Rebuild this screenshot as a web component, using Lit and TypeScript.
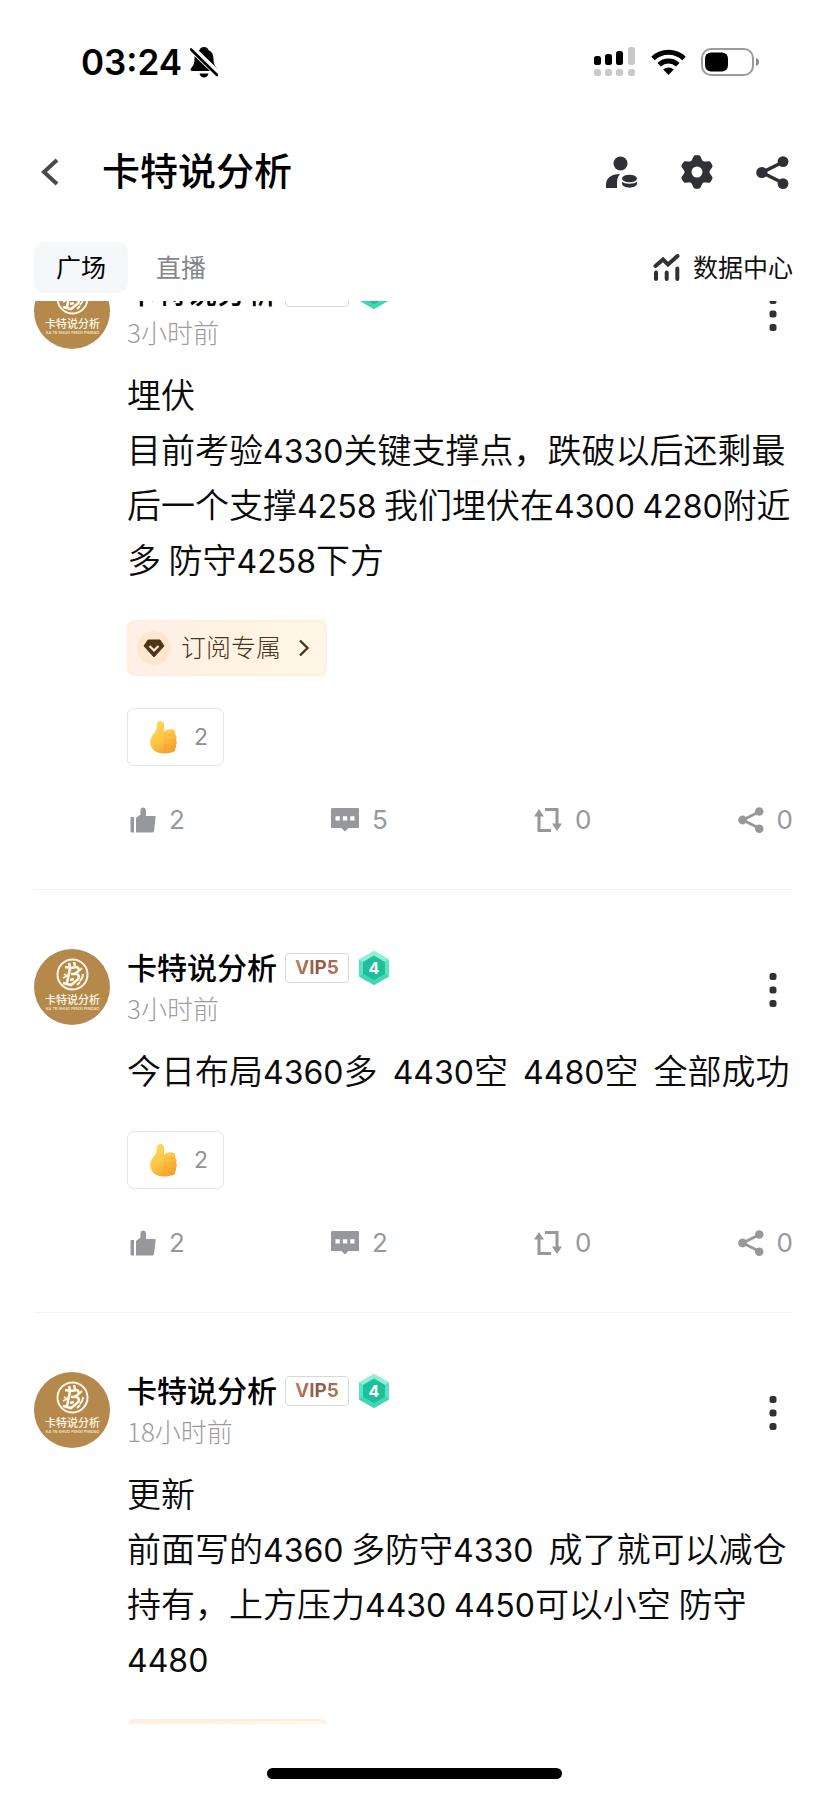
import { LitElement, html, css, svg, nothing } from "lit";
import { customElement, property } from "lit/decorators.js";

interface Post {
  time: string;
  text: string;
  subscribersOnly: boolean;
  reactions: number;
  likes: number;
  comments: number;
  reposts: number;
  shares: number;
}

const AUTHOR = "卡特说分析";

const POSTS: Post[] = [
  {
    time: "3小时前",
    text: "埋伏\n目前考验4330关键支撑点，跌破以后还剩最后一个支撑4258 我们埋伏在4300 4280附近多 防守4258下方",
    subscribersOnly: true,
    reactions: 2,
    likes: 2,
    comments: 5,
    reposts: 0,
    shares: 0,
  },
  {
    time: "3小时前",
    text: "今日布局4360多  4430空  4480空  全部成功",
    subscribersOnly: false,
    reactions: 2,
    likes: 2,
    comments: 2,
    reposts: 0,
    shares: 0,
  },
  {
    time: "18小时前",
    text: "更新\n前面写的4360 多防守4330  成了就可以减仓持有，上方压力4430 4450可以小空 防守4480",
    subscribersOnly: true,
    reactions: 1,
    likes: 1,
    comments: 0,
    reposts: 0,
    shares: 0,
  },
];

const shared = css`
  * {
    box-sizing: border-box;
  }
  button,
  a {
    display: flex;
    align-items: center;
    margin: 0;
    padding: 0;
    border: 0;
    background: none;
    color: inherit;
    font: inherit;
    text-decoration: none;
    cursor: pointer;
  }
  svg {
    display: block;
    flex: none;
  }
`;

const shareShape = svg`
  <path d="M27 6 6 16.500 27 27" fill="none" stroke="currentColor" stroke-width="3.600"/>
  <circle cx="27" cy="5.600" r="5.400" fill="currentColor"/>
  <circle cx="5.800" cy="16.500" r="5.600" fill="currentColor"/>
  <circle cx="27" cy="27.600" r="5.400" fill="currentColor"/>`;

@customElement("status-bar")
class StatusBar extends LitElement {
  static styles = [
    shared,
    css`
      :host {
        display: flex;
        align-items: center;
        justify-content: space-between;
        height: 124px;
        padding: 0 68px 0 81px;
        color: #000;
      }
      .side {
        display: flex;
        align-items: center;
      }
      .clock {
        margin-right: 8px;
        font: 600 35px/40px Inter, sans-serif;
      }
      .wifi {
        margin: 0 15px 0 16px;
      }
    `,
  ];

  render() {
    const bars = [
      [0, 9, 9],
      [11, 7, 11],
      [22, 4, 14],
    ];
    return html`
      <div class="side">
        <span class="clock">03:24</span>
        <svg width="28" height="31" viewBox="0 0 28 31" aria-label="静音">
          <path d="M14 0c2.200 0 4 1.200 4.400 3C22 4.600 23.500 8 23.500 12c0 5 1.500 7 3.500 9.300 1 1.300.3 2.700-1.200 2.700H2.200C.7 24 0 22.600 1 21.300 3 19 4.500 17 4.500 12c0-4 1.500-7.400 5.100-9C10 1.200 11.800 0 14 0z" />
          <path d="M9.500 26.500h9c-.6 2.400-2.300 4-4.500 4s-3.900-1.600-4.500-4z" />
          <path d="M0 0 28 27" stroke="#fff" stroke-width="7" />
          <path d="M1 2.500 27 28" stroke="#000" stroke-width="2.600" stroke-linecap="round" />
        </svg>
      </div>
      <div class="side">
        <svg width="41" height="30" viewBox="0 0 41 30">
          ${bars.map(([x, y, h]) => svg`<rect x=${x} y=${y} width="7" height=${h} rx="2.500"/>`)}
          <rect x="34" y="0" width="7" height="18" rx="2.500" fill="#c9c9c9" />
          ${[0, 11, 22, 34].map((x) => svg`<rect x=${x} y="22" width="7" height="7" rx="2.500" fill="#c9c9c9"/>`)}
        </svg>
        <svg class="wifi" width="35" height="26" viewBox="0 0 35 26">
          <path d="M2 9.500a22.500 22.500 0 0 1 31 0M8.200 15.800a13.500 13.500 0 0 1 18.600 0" fill="none" stroke="#000" stroke-width="5" />
          <path d="M17.500 26l-5.300-5.400a7.500 7.500 0 0 1 10.600 0z" />
        </svg>
        <svg width="59" height="28" viewBox="0 0 59 28">
          <rect x="1" y="1" width="51" height="26" rx="9" fill="none" stroke="#9b9b9b" stroke-width="2" />
          <rect x="4" y="4.500" width="23" height="19" rx="6" />
          <path d="M55 10c4 1 4 7 0 8z" fill="#8c8c8c" />
        </svg>
      </div>
    `;
  }
}

@customElement("channel-header")
class ChannelHeader extends LitElement {
  static styles = [
    shared,
    css`
      :host {
        display: block;
        padding: 0 35px 0 34px;
        font-family: "Noto Sans CJK SC", sans-serif;
      }
      .bar {
        display: flex;
        align-items: center;
        height: 94px;
        padding: 2px 4px 0 7px;
      }
      .title {
        flex: 1;
        margin: 0 0 0 43px;
        padding-bottom: 6px;
        font-size: 38px;
        font-weight: 500;
        line-height: 48px;
        color: #000;
      }
      .tools {
        display: flex;
        gap: 43px;
        color: #2f3136;
      }
      .tabs {
        display: flex;
        align-items: center;
        height: 51px;
        margin-top: 24px;
        font-size: 25px;
      }
      .tab {
        height: 51px;
        padding: 0 22px 4px;
        border-radius: 10px;
        color: #85868a;
      }
      .tab.active {
        margin-right: 6px;
        background: #f5f7fa;
        color: #000;
      }
      .data {
        gap: 13px;
        margin-left: auto;
        color: #111;
      }
      .data span {
        padding-bottom: 4px;
      }
    `,
  ];

  render() {
    return html`
      <header class="bar">
        <button aria-label="返回">
          <svg width="18" height="28" viewBox="0 0 18 28">
            <path d="M16 2 3 14l13 12" fill="none" stroke="#4a4a4a" stroke-width="4" />
          </svg>
        </button>
        <h1 class="title">${AUTHOR}</h1>
        <nav class="tools">
          <button aria-label="订阅管理">
            <svg width="33" height="33" viewBox="0 0 33 33" fill="currentColor">
              <circle cx="15.500" cy="7.500" r="7" />
              <path d="M1 32V29C1 22 6 18 15 18l-.6 1C12.500 21 12 24 12 28v4z" />
              <ellipse cx="24.500" cy="22.500" rx="7.500" ry="3.800" />
              <path d="M17 25.500c2 3 13 3 15 0v2c0 5.500-15 5.500-15 0z" />
            </svg>
          </button>
          <button aria-label="设置">
            <svg width="32" height="34" viewBox="-16 -17 32 34" fill="currentColor">
              ${[0, 60, 120, 180, 240, 300].map(
                (angle) => svg`<path d="M-6-10-3.600-15.300Q-3-16.700-1.600-16.700H1.600Q3-16.700 3.600-15.300L6-10z" transform="rotate(${angle})"/>`
              )}
              <circle r="9" fill="none" stroke="currentColor" stroke-width="7" />
            </svg>
          </button>
          <button aria-label="分享">
            <svg width="33" height="33" viewBox="0 0 33 33">${shareShape}</svg>
          </button>
        </nav>
      </header>
      <nav class="tabs">
        <button class="tab active">广场</button>
        <button class="tab">直播</button>
        <a class="data" href="#data">
          <svg width="27" height="27" viewBox="0 0 27 27" fill="none" stroke="#303238" stroke-width="4" stroke-linecap="round">
            <path d="M2.500 12 10 5.500l5 5L24.500 2" />
            <path d="M3 18.500V25M13.700 18.500V25M24.300 14.500V25" />
          </svg>
          <span>数据中心</span>
        </a>
      </nav>
    `;
  }
}

@customElement("feed-post")
class FeedPost extends LitElement {
  @property({ attribute: false }) post!: Post;

  static styles = [
    shared,
    css`
      :host {
        display: grid;
        grid-template-columns: 76px minmax(0, 1fr);
        column-gap: 17px;
        padding-bottom: 53px;
        border-bottom: 1px solid #f2f2f3;
        font-family: "Noto Sans CJK SC", sans-serif;
      }
      .head {
        display: flex;
        align-items: flex-start;
        justify-content: space-between;
        height: 93px;
      }
      .who {
        display: flex;
        align-items: center;
        height: 38px;
      }
      .name {
        margin-right: 8px;
        padding-bottom: 4px;
        font-size: 30px;
        font-weight: 500;
        line-height: 38px;
        color: #000;
      }
      .vip {
        width: 64px;
        height: 30px;
        margin-right: 10px;
        border: 1px solid #d8d8da;
        border-radius: 4px;
        text-align: center;
        font: 700 19px/28px Inter, sans-serif;
        color: #a9664a;
      }
      .vip span {
        background: linear-gradient(100deg, #cf8560, #8e5744 50%, #c07455);
        -webkit-background-clip: text;
        background-clip: text;
        color: transparent;
      }
      .level {
        font: 700 16px Inter, sans-serif;
      }
      .time {
        display: block;
        margin-top: 2px;
        font-size: 26px;
        font-weight: 300;
        line-height: 38px;
        color: #9c9c9f;
      }
      .more {
        margin: 24px 16px 0 0;
      }
      .text {
        margin: 0 -6px 34px 0;
        font-size: 34px;
        font-weight: 350;
        line-height: 55px;
        white-space: pre-wrap;
        color: #0b0b0b;
      }
      .num {
        font-family: Inter, sans-serif;
        font-size: 32px;
        font-weight: 400;
        line-height: 32px;
      }
      .sub {
        width: 200px;
        height: 56px;
        margin-bottom: 32px;
        padding-left: 8px;
        border: 2px solid #ffeedd;
        border-radius: 7px;
        background: linear-gradient(90deg, #fff0e6, #fff7e3);
        font-size: 25px;
        font-weight: 300;
        color: #4e3418;
      }
      .sub span {
        margin: 0 17px 0 10px;
        padding-bottom: 4px;
      }
      .reaction {
        gap: 17px;
        width: 97px;
        height: 58px;
        padding-left: 22px;
        border: 1px solid #e3e4e6;
        border-radius: 7px;
        font: 400 23px/28px Inter, sans-serif;
        color: #8f9195;
      }
      .actions {
        display: flex;
        justify-content: space-between;
        height: 32px;
        margin-top: 38px;
        padding-left: 3px;
        font: 400 26px/32px Inter, sans-serif;
        color: #96989c;
      }
      .actions button {
        gap: 13px;
      }
      .brand {
        font: 500 11px "Noto Sans CJK SC", sans-serif;
      }
      .pinyin {
        font: 600 4px Inter, sans-serif;
      }
    `,
  ];

  private avatar() {
    return html`
      <svg width="76" height="76" viewBox="0 0 76 76" aria-label=${AUTHOR}>
        <circle cx="38" cy="38" r="38" fill="#b5894b" />
        <g fill="none" stroke="#fff8ea">
          <circle cx="38.500" cy="25.500" r="15" stroke-width="2" />
          <path d="M35 14l1 4M40 13l1 4M31 18l6 1 6-1c3 2 2 5-2 6.500 5 1 5 5 1 7.500l-5 4-8-2M36 19l-3 15M37 25h4M36 31l4-1" stroke-width="2.600" />
          <path d="M30 25l3 2-4 2M45 22l3-3M46 32c2-2 3-4 3-7M43 36l3-3" stroke-width="1.800" />
        </g>
        <text class="brand" x="38.500" y="55" text-anchor="middle" fill="#fff8ea">${AUTHOR}</text>
        <text class="pinyin" x="38.500" y="61" text-anchor="middle" fill="#f3e2c4">KA TE SHUO FENXI PINDAO</text>
      </svg>
    `;
  }

  private numerals(text: string) {
    return text
      .split(/(\d+)/)
      .map((part) => (/^\d/.test(part) ? html`<span class="num">${part}</span>` : part));
  }

  render() {
    const p = this.post;
    return html`
      ${this.avatar()}
      <article>
        <div class="head">
          <div>
            <div class="who">
              <span class="name">${AUTHOR}</span>
              <span class="vip"><span>VIP5</span></span>
              <svg width="30" height="34" viewBox="0 0 30 34">
                <path d="M15 0 30 8.500v17L15 34 0 25.500v-17z" fill="#5be3c4" />
                <path d="M15 0 30 8.500 15 17 0 8.500z" fill="#8cf0da" />
                <path d="M15 4.500 26 11v12l-11 6.500L4 23V11z" fill="#1fbf98" />
                <path d="M15 34 0 25.500 4 23l11 6.500L26 23l4 2.500z" fill="#43d6b4" />
                <text class="level" x="15" y="23" text-anchor="middle" fill="#fff">4</text>
              </svg>
            </div>
            <time class="time">${p.time}</time>
          </div>
          <button class="more" aria-label="更多">
            <svg width="8" height="35" viewBox="0 0 8 35" fill="#2f3136">
              <rect x=".5" y="0" width="7" height="7" rx="2.500" />
              <rect x=".5" y="13.500" width="7" height="7" rx="2.500" />
              <rect x=".5" y="27" width="7" height="7" rx="2.500" />
            </svg>
          </button>
        </div>
        <p class="text">${this.numerals(p.text)}</p>
        ${p.subscribersOnly
          ? html`
              <a class="sub" href="#subscribe">
                <svg width="34" height="34" viewBox="0 0 34 34">
                  <circle cx="17" cy="17" r="17" fill="#ffe6cf" />
                  <path d="M11 9h12l4 6-10 11L7 15z" fill="#4f3516" stroke="#4f3516" stroke-linejoin="round" />
                  <path d="M12.500 15l4.500 4.500 4.500-4.500" fill="none" stroke="#ffe9d4" stroke-width="2.200" />
                </svg>
                <span>订阅专属</span>
                <svg width="12" height="18" viewBox="0 0 12 18">
                  <path d="M2 1.500 9.500 9 2 16.500" fill="none" stroke="#4e3418" stroke-width="2.400" />
                </svg>
              </a>
            `
          : nothing}
        <button class="reaction">
          <svg width="27" height="34" viewBox="0 0 27 34">
            <defs>
              <linearGradient id="skin" x1="0" y1="0" x2=".5" y2="1">
                <stop offset="0" stop-color="#ffdb58" />
                <stop offset=".6" stop-color="#fdc648" />
                <stop offset="1" stop-color="#f3a433" />
              </linearGradient>
            </defs>
            <path d="M7 4C7 0 13.500 0 14 4v8l2-2q4-1.500 8 0c1.500 1 1.500 3 1 4.500 1.500 1 2 3.500 1 5 1 1.500 1 4 0 5.500.3 2-.5 3.500-1 4.500.5 2-1.500 3-4 3-5 1.500-13 1.500-17-2C-.5 27-1 19 3 14.500 6 11.500 7 8 7 4z" fill="url(#skin)" />
            <path d="M15 12v20M16 15h9M16 20h9M16 25.500h9" fill="none" stroke="#eb9d2c" stroke-opacity=".35" />
          </svg>
          ${p.reactions}
        </button>
        <div class="actions">
          <button aria-label="赞 ${p.likes}">
            <svg width="26" height="26" viewBox="0 0 26 26" fill="currentColor">
              <path d="M1.500 10H4v15.500H1.500A1 1 0 0 1 .5 24.500V11a1 1 0 0 1 1-1zM6 11l4.500-3.500V3.500C10.500-.5 16-.5 16 3.500V9h8.500c.8 0 1.200.6 1.100 1.400l-1.500 13c-.2 1.300-1 2.100-2.200 2.100H6z" />
            </svg>
            ${p.likes}
          </button>
          <button aria-label="评论 ${p.comments}">
            <svg width="28" height="24" viewBox="0 0 28 24">
              <path d="M1 0h26a1 1 0 0 1 1 1v19H17.500L14 23.500 10.500 20H0V1a1 1 0 0 1 1-1z" fill="currentColor" />
              <path d="M4.500 8.300h4.300v4.300H4.500zM11.900 8.300h4.300v4.300h-4.300zM19.200 8.300h4.300v4.300h-4.300z" fill="#fff" />
            </svg>
            ${p.comments}
          </button>
          <button aria-label="转发 ${p.reposts}">
            <svg width="28" height="26" viewBox="0 0 28 26">
              <path d="M5 8v15.500h12M11 2.500h12V18" fill="none" stroke="currentColor" stroke-width="3" />
              <path d="M0 9.500 5 2l5 7.500zM18 16.500l5 7.500 5-7.500z" fill="currentColor" />
            </svg>
            ${p.reposts}
          </button>
          <button aria-label="分享 ${p.shares}">
            <svg width="26" height="26" viewBox="0 0 33 33">${shareShape}</svg>
            ${p.shares}
          </button>
        </div>
      </article>
    `;
  }
}

@customElement("app-root")
class AppRoot extends LitElement {
  static styles = [
    shared,
    css`
      :host {
        display: flex;
        flex-direction: column;
        height: 100vh;
        background: #fff;
      }
      .feed {
        flex: 1;
        min-height: 0;
        margin-top: 8px;
        padding: 0 35px 0 34px;
        overflow: hidden;
      }
      .list {
        display: flex;
        flex-direction: column;
        gap: 59px;
        margin-top: -28px;
      }
      .home {
        display: flex;
        flex: none;
        align-items: center;
        justify-content: center;
        height: 72px;
        padding-top: 27px;
      }
      .home span {
        width: 295px;
        height: 11px;
        border-radius: 6px;
        background: #000;
      }
    `,
  ];

  render() {
    return html`
      <status-bar></status-bar>
      <channel-header></channel-header>
      <main class="feed">
        <div class="list">${POSTS.map((p) => html`<feed-post .post=${p}></feed-post>`)}</div>
      </main>
      <div class="home"><span></span></div>
    `;
  }
}
